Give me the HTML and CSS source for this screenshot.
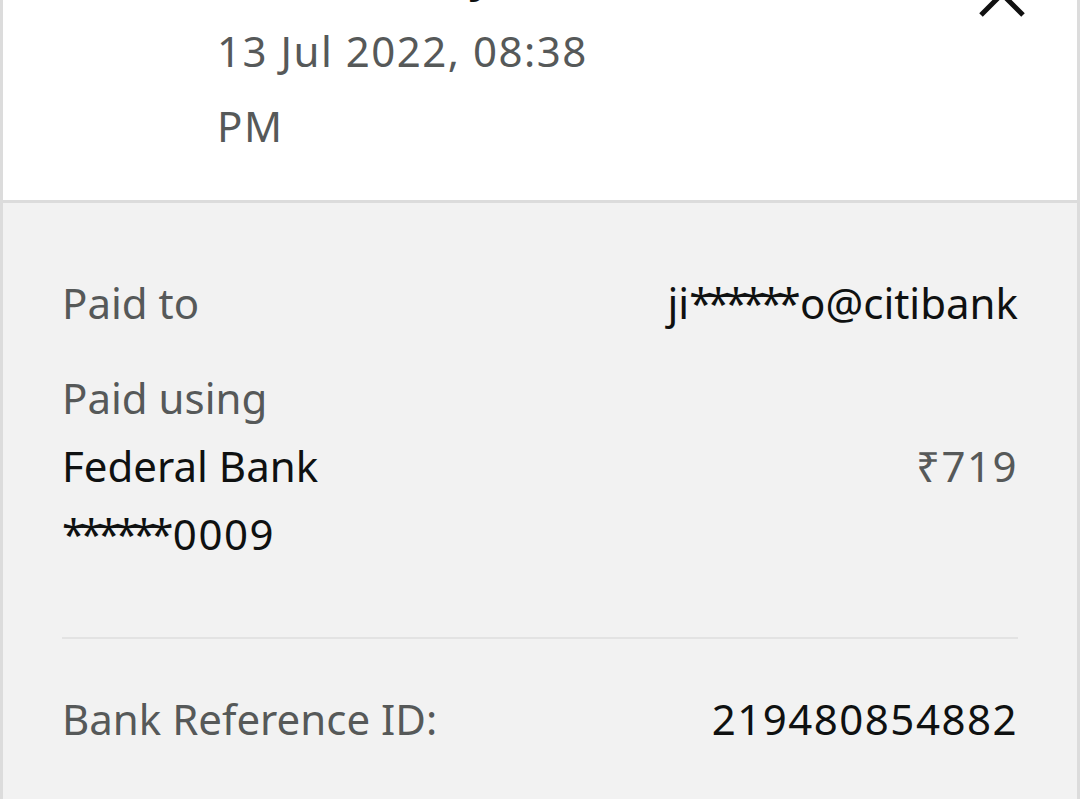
FILE: index.html
```html
<!DOCTYPE html>
<html lang="en">

<head>
    <meta charset="UTF-8">
    <meta name="viewport" content="width=device-width, initial-scale=1.0">
    <title>Payment Details</title>
    <link rel="stylesheet" href="styles.css">
</head>

<body>
    <div class="sheet">
        <div class="header">
            <div class="header-text">
                <div class="title">Paid<br>Successfully</div>
                <div class="date">13 Jul 2022, 08:38 PM</div>
            </div>
            <button class="close-btn" aria-label="Close">
                <svg width="48" height="48" viewBox="0 0 48 48">
                    <path d="M3 3 L45 45 M45 3 L3 45" stroke="#111" stroke-width="5" fill="none" />
                </svg>
            </button>
        </div>

        <div class="details">
            <div class="row">
                <span class="label">Paid to</span>
                <span class="value">ji<span class="mask">******</span>o@citibank</span>
            </div>

            <div class="paid-using">
                <div class="label">Paid using</div>
                <div class="row">
                    <div class="value">
                        Federal Bank<br><span class="mask">******</span><span class="digits">0009</span>
                    </div>
                    <span class="amount digits">₹719</span>
                </div>
            </div>

            <hr class="divider">

            <div class="row">
                <span class="label">Bank Reference ID:</span>
                <span class="value digits">219480854882</span>
            </div>
        </div>
    </div>
</body>

</html>
```

FILE: styles.css
```css
body {
    margin: 0;
    padding: 0;
    background-color: #f2f2f2;
    font-family: "Noto Sans", Arial, sans-serif;
    overflow: hidden;
}

.sheet {
    margin-top: -137px;
    border-left: 3px solid #dcdcdc;
    border-right: 3px solid #dcdcdc;
    min-height: 1000px;
}

.header {
    display: flex;
    justify-content: space-between;
    align-items: flex-start;
    background-color: #ffffff;
    border-bottom: 3px solid #dcdcdc;
    padding: 0 51px 37px 214px;
}

.header-text {
    width: 420px;
}

.title {
    font-size: 42px;
    line-height: 75px;
    font-weight: bold;
    letter-spacing: 2px;
    color: #0f1111;
}

.date {
    font-size: 42px;
    line-height: 75px;
    letter-spacing: 1.5px;
    color: #565959;
}

.close-btn {
    background: none;
    border: none;
    padding: 0;
    margin-top: 107px;
    cursor: pointer;
}

.details {
    padding: 66px 59px 40px 59px;
    font-size: 42px;
    line-height: 68px;
}

.row {
    display: flex;
    justify-content: space-between;
    align-items: flex-start;
}

.label {
    color: #565959;
}

.value {
    color: #0f1111;
}

.mask {
    letter-spacing: -5.5px;
    margin-right: 5px;
}

.digits {
    letter-spacing: 1.5px;
}

.amount {
    color: #565959;
}

.paid-using {
    margin-top: 27px;
}

.divider {
    border: none;
    border-top: 2px solid #e3e3e3;
    margin: 69px 0 46px 0;
}
```
